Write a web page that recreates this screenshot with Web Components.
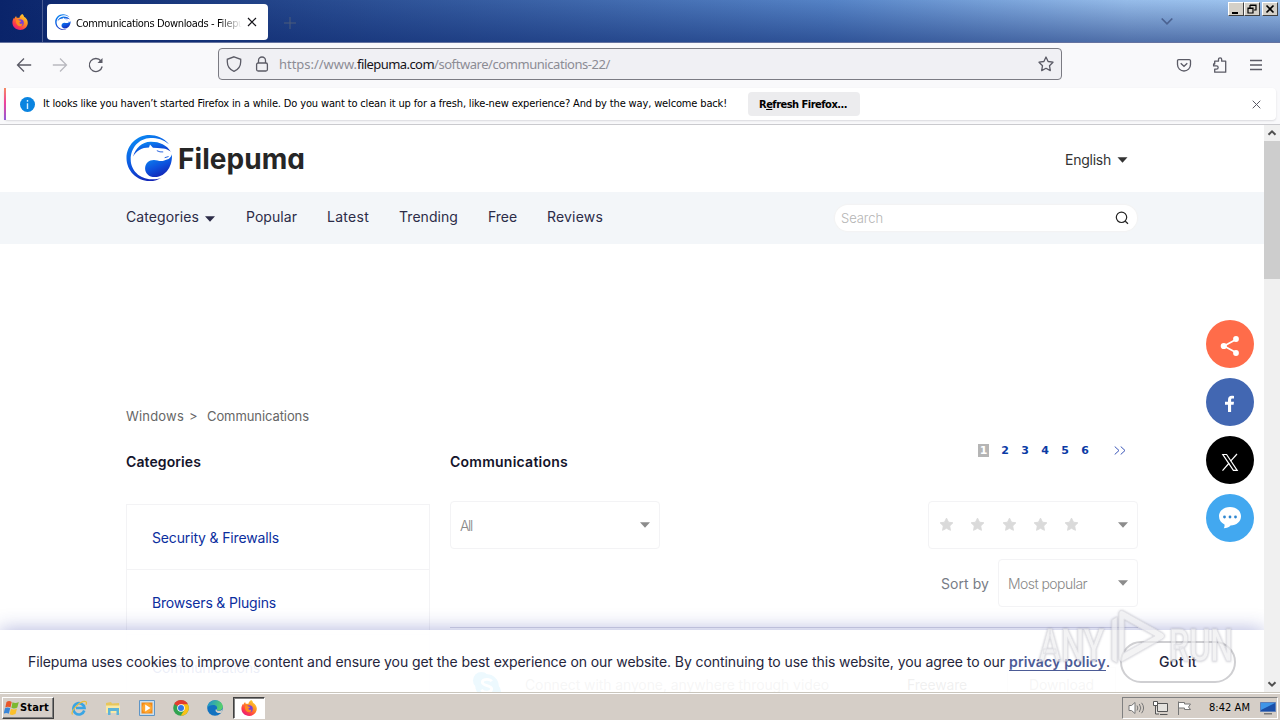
<!DOCTYPE html>
<html lang="en">
<head>
<meta charset="utf-8">
<title>Communications Downloads - Filepuma</title>
<style>
html, body { margin: 0; height: 100%; }
body {
    display: flex;
    flex-direction: column;
    width: 1280px;
    height: 720px;
    overflow: hidden;
    background: #fff;
    font-family: Inter, "Liberation Sans", sans-serif;
}
.view { display: flex; height: 567px; }
</style>
</head>
<body>
<tab-strip></tab-strip>
<nav-toolbar></nav-toolbar>
<notice-bar></notice-bar>
<div class="view">
    <site-page></site-page>
    <scroll-bar></scroll-bar>
</div>
<task-bar></task-bar>

<script>
// Shared base: every element renders its html() into an open shadow root
class BaseElement extends HTMLElement {
    constructor() {
        super();
        this.attachShadow({ mode: 'open' }).innerHTML = this.html();
    }
}

const CHROME_FONT = '"DejaVu Sans Condensed", "DejaVu Sans", sans-serif';

const FIREFOX = `
<defs>
  <linearGradient id="fx" x1=".9" y1="0" x2=".2" y2="1"><stop offset="0" stop-color="#ffe03a"/><stop offset=".4" stop-color="#ff9420"/><stop offset=".75" stop-color="#ff3b4a"/><stop offset="1" stop-color="#e21586"/></linearGradient>
</defs>
<path fill="url(#fx)" d="M10.3 0c1 .9 1.6 1.8 1.8 2.8 2 1.2 3.9 3.6 3.7 6.3-.2 4-3.5 6.9-7.6 6.9C3.800 16 .4 12.700.4 8.600c0-2.300.9-3.900 1.700-4.900l.3 1.200C2.700 3.500 3.400 2.600 4.200 2c0 .6.2 1.300.6 1.800 1-.2 1.700 0 2.500.3C7.600 2.300 8.700.7 10.300 0z"/>
<circle cx="8.300" cy="8.700" r="3.500" fill="#7a3fd6"/>
<path fill="#ff8a1e" d="M4 6.200c1.200-.7 2.600-.4 3.500.3l1.700.5c-.3.900-1.400 1.100-1.900 1.600.2 1.300 1.800 1.700 3 .8.3 2-1.100 3-2.700 2.800C5.300 12 3.600 9.200 4 6.200z"/>`;

// Round puma mark, drawn on a 48x48 grid
const PUMA = `
<defs><linearGradient id="pu" x1=".2" y1="0" x2=".7" y2="1"><stop offset="0" stop-color="#0a8cf5"/><stop offset=".55" stop-color="#0d50dc"/><stop offset="1" stop-color="#141fb0"/></linearGradient></defs>
<path fill="url(#pu)" d="M44 10C38.500 3.200 31 .5 24 .5 11 .5.5 11 .5 24S11 47.500 24 47.500c5 0 9-1.300 12.500-3.700C32.500 45.500 29 46 26 45.700 14 45.500 4.800 36.500 4.800 25.500 4.800 13.500 13 4 25 3.500c7.500 0 13 1.500 19 6.500z"/>
<path fill="url(#pu)" d="M7.300 22.500C9.500 13.500 16.500 7.600 25 7.300c9-.2 16.500 3.200 20.800 10.200-2.600-1.600-5-3-8-3.100l-5.500-.6-4.800-.2-3-3.400-1 3.200C16.500 13.300 11 16.500 7.300 22.500z"/>
<path fill="url(#pu)" d="M46.800 20.200c1.200 11-5.500 23-17.300 23.300-6.200 0-10-3.900-10-8.800 0-5.300 4-8.700 9-8.700 3.500 0 5.500 1.700 9 1 2.300-.5 3.600-1.600 6-2.100 1.600-1 2.800-2.600 3.300-4.700z"/>
<path fill="none" stroke="#0d50dc" stroke-width=".9" d="M31.500 16.500l3.200 1.200 3.300.1M43.500 22.500l-4 1.200"/>`;

const caret = (color, w = 10) => `<svg width="${w}" height="6" viewBox="0 0 10 6"><path fill="${color}" d="M0 .3h10L5 5.700z"/></svg>`;

class TabStrip extends BaseElement {
    html() {
        return `<style>
        :host {
            display: flex;
            height: 43px;
            box-sizing: border-box;
            background: linear-gradient(180deg, transparent, rgba(10,36,106,.5)), linear-gradient(90deg, #0a246a 0%, #2b4f94 28%, #5583c6 65%, #96bce9 88%, #a0c6f0);
            border-bottom: 1px solid #6573a0;
            font: 11px ${CHROME_FONT};
        }
        svg { display: block; }
        .home { width: 43px; border-right: 1px solid #4a5d93; padding: 14px 0 0 12px; box-sizing: border-box; }
        .tab {
            display: flex;
            align-items: center;
            width: 221px;
            height: 36px;
            margin: 4px 0 0 4px;
            padding: 0 11px 0 8px;
            box-sizing: border-box;
            background: #fff;
            border-radius: 4px;
        }
        .title { width: 166px; margin: 2px 5px 0 5px; overflow: hidden; white-space: nowrap; color: #000; -webkit-mask: linear-gradient(90deg, #000 86%, transparent); mask: linear-gradient(90deg, #000 86%, transparent); }
        .plus { margin: 17px 0 0 16px; }
        .list { margin: 17px 0 0 auto; }
        .buttons { display: flex; margin: 2px 2px 0 55px; }
        .buttons svg { width: 16px; height: 14px; background: #d4d0c8; box-sizing: border-box; border: 1px solid; border-color: #fff #404040 #404040 #fff; }
        .buttons svg:last-child { margin-left: 2px; }
        </style>
        <div class="home"><svg width="16" height="16" viewBox="0 0 16 16">${FIREFOX}</svg></div>
        <div class="tab">
            <svg width="16" height="16" viewBox="0 0 48 48">${PUMA}</svg>
            <div class="title"><fit-text w="183">Communications Downloads - Filepuma</fit-text></div>
            <svg width="10" height="10" viewBox="0 0 10 10"><path d="M1 1l8 8M9 1L1 9" stroke="#15141a" stroke-width="1.2"/></svg>
        </div>
        <svg class="plus" width="12" height="12"><path d="M0 6h12M6 0v12" stroke="#4c5d7b"/></svg>
        <svg class="list" width="12" height="9"><path d="M.7 1.500L6 6.800l5.300-5.300" fill="none" stroke="#4b6290" stroke-width="1.700"/></svg>
        <div class="buttons">
            <svg viewBox="0 0 14 12"><path d="M3 9h6v2H3z"/></svg>
            <svg viewBox="0 0 14 12"><path d="M5 2h6v5H9M5 2v3M5 2.500h6M3 5h5v5H3zM3 5.500h5" fill="none" stroke="#000" stroke-width="1.200"/></svg>
            <svg viewBox="0 0 14 12"><path d="M3.500 2.500l7 7M10.500 2.500l-7 7" stroke="#000" stroke-width="1.700"/></svg>
        </div>`;
    }
}

class NavToolbar extends BaseElement {
    html() {
        return `<style>
        :host { display: flex; align-items: center; height: 45px; padding: 0 16px; box-sizing: border-box; background: #f9f9fb; font: 13px "Noto Sans", sans-serif; }
        svg { display: block; fill: none; stroke: #5b5b66; stroke-width: 1.300; margin-top: -2px; }
        .back { margin-right: 20px; }
        .next { margin-right: 20px; opacity: .4; }
        .url {
            display: flex;
            align-items: center;
            width: 844px;
            height: 32px;
            margin: -3px 0 0 114px;
            padding: 0 7px;
            box-sizing: border-box;
            background: #f0f0f4;
            border: 1px solid #7b7b83;
            border-radius: 4px;
            color: #8c8c94;
            white-space: nowrap;
        }
        .url svg { margin: 0; }
        .lock { margin: 0 9px 0 12px !important; }
        .url b { font-weight: 400; color: #15141a; letter-spacing: .35px; }
        .star { margin-left: auto !important; }
        .pocket { margin-left: 114px; }
        .ext { margin-left: 20px; }
        .menu { margin-left: 20px; }
        </style>
        <svg class="back" width="16" height="16"><path d="M15.200 8H1.500M8 1.500L1.500 8 8 14.500"/></svg>
        <svg class="next" width="16" height="16"><path d="M.8 8h13.700M8 1.500L14.500 8 8 14.500"/></svg>
        <svg width="16" height="16"><path d="M14.200 9.500A6.500 6.500 0 1 1 13 4"/><path d="M14.500 1v5h-5z" fill="#5b5b66" stroke="none"/></svg>
        <div class="url">
            <svg width="16" height="16"><path d="M8 .8l6.700 2.500v2.400C14.700 10 12 13.600 8 15.400 4 13.600 1.300 10 1.300 5.700V3.300z"/></svg>
            <svg class="lock" width="16" height="16"><rect x="2.600" y="7" width="10.800" height="8" rx="1.500"/><path d="M4.500 7V4.500a3.500 3.500 0 0 1 7 0V7"/></svg>
            <fit-text w="78">https://www.</fit-text><b><fit-text w="77">filepuma.com</fit-text></b><fit-text w="176">/software/communications-22/</fit-text>
            <svg class="star" width="16" height="16"><path stroke-linejoin="round" d="M8 1l2.100 4.500 4.900.7-3.500 3.500.8 4.900L8 12.300l-4.300 2.300.8-4.900L1 6.200l4.900-.7z"/></svg>
        </div>
        <svg class="pocket" width="16" height="16"><path d="M2.700 2.600h10.600a1.200 1.200 0 0 1 1.200 1.200v3.700a6.500 6.500 0 0 1-13 0V3.800a1.200 1.200 0 0 1 1.200-1.200z"/><path d="M4.700 6.200L8 9.300l3.300-3.100"/></svg>
        <svg class="ext" width="16" height="16"><path stroke-linejoin="round" d="M2.700 7V4.200h3.800V2.400a1.600 1.600 0 0 1 3.200 0v1.800h4v11h-11v-3h1.800a1.600 1.600 0 0 0 0-3.300H1.600V7z"/></svg>
        <svg class="menu" width="16" height="16"><path d="M2 3.500h12M2 8h12M2 12.500h12"/></svg>`;
    }
}

class NoticeBar extends BaseElement {
    html() {
        return `<style>
        :host { display: block; height: 37px; padding: 0 4px; box-sizing: border-box; background: #f9f9fb; border-bottom: 1px solid #cacace; font: 11px ${CHROME_FONT}; color: #000; }
        .bar { display: flex; align-items: center; height: 32px; background: #fff; border-radius: 4px; padding-right: 15px; box-shadow: 0 1px 2px rgba(58,57,68,.16); white-space: nowrap; }
        .accent { width: 2px; height: 32px; background: linear-gradient(#f58b62, #f0429a 45%, #9059d8); }
        .info { margin: 0 8px 0 14px; }
        .msg { margin-top: -2px; }
        .btn { display: flex; align-items: center; width: 112px; height: 24px; margin-left: 21px; padding-left: 11px; box-sizing: border-box; background: #ececee; border-radius: 4px; font-weight: 700; }
        .close { margin-left: auto; }
        </style>
        <div class="bar">
            <div class="accent"></div>
            <svg class="info" width="15" height="15"><circle cx="7.500" cy="7.500" r="7.500" fill="#0a84e0"/><path d="M7.500 3v1.800M7.500 6.200v5.800" stroke="#d8efff" stroke-width="1.400"/></svg>
            <fit-text class="msg" w="684">It looks like you haven’t started Firefox in a while. Do you want to clean it up for a fresh, like-new experience? And by the way, welcome back!</fit-text>
            <div class="btn"><fit-text w="88">R<u>e</u>fresh Firefox...</fit-text></div>
            <svg class="close" width="9" height="9"><path d="M.7.7l7.600 7.600M8.300.7L.7 8.300" stroke="#5b5b66"/></svg>
        </div>`;
    }
}

class ScrollBar extends BaseElement {
    html() {
        return `<style>
        :host { display: flex; flex-direction: column; width: 16px; height: 567px; background: #f0f0f0; }
        svg { display: block; flex: none; }
        .thumb { height: 138px; background: #cdcdcd; }
        .down { margin-top: auto; }
        </style>
        <svg width="16" height="16"><path d="M4.500 9.800L8 6.300l3.500 3.500" fill="none" stroke="#505050" stroke-width="2"/></svg>
        <div class="thumb"></div>
        <svg class="down" width="16" height="16"><path d="M4.500 6.200L8 9.700l3.500-3.500" fill="none" stroke="#505050" stroke-width="2"/></svg>`;
    }
}

class SiteHeader extends BaseElement {
    html() {
        return `<style>
        :host { display: block; }
        .top, nav { display: flex; align-items: center; padding: 0 126px; }
        .top { height: 67px; }
        .logo { margin-top: -1px; }
        .name { margin: 0 0 0 5px; font-size: 28px; font-weight: 700; color: #262626; font-feature-settings: "cv11", "ss03"; }
        .lang { display: flex; align-items: center; gap: 6px; margin: 3px 10px 0 auto; font-size: 14px; color: #333; }
        .lang fit-text { margin-top: -1px; }
        nav { height: 52px; background: #f3f6f9; font-size: 14px; color: #2c2c48; }
        nav fit-text { margin: -3px 30px 0 0; }
        nav .first { margin-right: 6px; }
        nav > svg { margin: 1px 31px 0 0; }
        .search { display: flex; align-items: center; justify-content: space-between; width: 302px; height: 26px; margin: 0 1px 0 auto; padding: 0 8px 0 6px; box-sizing: border-box; background: #fff; border-radius: 13px; box-shadow: 0 0 1px 1px #f3f3f3; font-size: 13px; font-weight: 300; color: #b4b4b4; }
        .search fit-text { margin: 0; }
        .search svg { margin-top: -1px; }
        </style>
        <div class="top">
            <svg class="logo" width="47" height="48" viewBox="0 0 48 48">${PUMA}</svg>
            <fit-text class="name" w="127">Filepuma</fit-text>
            <div class="lang"><fit-text w="46">English</fit-text>${caret('#333', 11)}</div>
        </div>
        <nav>
            <fit-text class="first" w="73">Categories</fit-text>${caret('#2c2c48')}
            <fit-text w="51">Popular</fit-text>
            <fit-text w="42">Latest</fit-text>
            <fit-text w="59">Trending</fit-text>
            <fit-text w="29">Free</fit-text>
            <fit-text w="56">Reviews</fit-text>
            <div class="search"><fit-text w="42">Search</fit-text><svg width="14" height="14"><g fill="none" stroke="#222" stroke-width="1.200"><circle cx="6.500" cy="6.300" r="5.200"/><path d="M10.300 10.200l2.700 2.600"/></g></svg></div>
        </nav>`;
    }
}

class SelectBox extends BaseElement {
    html() {
        return `<style>
        :host { display: flex; align-items: center; justify-content: space-between; width: 210px; height: 48px; padding: 0 9px; box-sizing: border-box; border: 1px solid #f3f3f5; border-radius: 4px; font-size: 14px; font-weight: 300; color: #888; }
        svg { margin-top: -1px; }
        </style>
        <slot></slot>${caret('#8c8c8c')}`;
    }
}

class StarRow extends BaseElement {
    html() {
        const star = '<svg width="15" height="15" viewBox="0 0 16 16"><path fill="#dadada" stroke="#dadada" stroke-linejoin="round" d="M8 1.200l2.100 4.300 4.700.7-3.400 3.300.8 4.700L8 12l-4.200 2.200.8-4.700L1.200 6.200l4.700-.7z"/></svg>';
        return `<style>
        :host { display: flex; gap: 16.300px; margin: -2px 0 0 1px; }
        svg { display: block; }
        </style>${star.repeat(5)}`;
    }
}

class ShareRail extends BaseElement {
    html() {
        return `<style>
        :host { display: flex; flex-direction: column; gap: 10px; }
        svg { display: block; }
        </style>
        <svg width="48" height="48"><circle cx="24" cy="24" r="24" fill="#ff6c4a"/><path d="M30 19.500L18 26l12 6.500" fill="none" stroke="#fff" stroke-width="1.700"/><g fill="#fff"><circle cx="30" cy="19" r="2.900"/><circle cx="17.800" cy="26" r="3.100"/><circle cx="30" cy="33" r="2.900"/></g></svg>
        <svg width="48" height="48"><circle cx="24" cy="24" r="24" fill="#4267b2"/><path fill="#fff" d="M22 34v-7.300h-3v-2.900h3V22c0-3 1.500-4.300 3.800-4.300.9 0 1.700.1 2.200.2v2.500h-1.500c-1.200 0-1.400.6-1.400 1.500v1.900H28l-.4 2.900h-2.500V34z"/></svg>
        <svg width="48" height="48"><circle cx="24" cy="24" r="24"/><path d="M16.800 18.500h3.800l10.600 15.800h-3.800z" fill="none" stroke="#fff" stroke-width="1.200"/><path d="M31 18l-6.400 7.200M23.200 27L16.500 34.700" stroke="#fff" stroke-width="1.200"/></svg>
        <svg width="48" height="48"><circle cx="24" cy="24" r="24" fill="#42a8f0"/><path fill="#fff" d="M24 13c6.300 0 11 4 11 9.300S30.500 31.500 24.500 31.500c-1.500 1.700-3.800 2.700-6.700 2.700.6-1 .9-2.200.7-3.600-3.300-1.600-5.500-4.600-5.500-8.300C13 17 17.700 13 24 13z"/><g fill="#2e86d0"><circle cx="18.500" cy="23" r="1.400"/><circle cx="24" cy="23" r="1.400"/><circle cx="29.500" cy="23" r="1.400"/></g></svg>`;
    }
}

class CookieBar extends BaseElement {
    html() {
        return `<style>
        :host { display: flex; align-items: center; height: 62px; padding: 0 28px; box-sizing: border-box; background: rgba(255,255,255,.92); box-shadow: 0 0 20px rgba(40,50,160,.38); font-size: 14px; color: #25253c; white-space: nowrap; }
        .text { display: flex; }
        .text > fit-text:first-child { margin-right: 4px; }
        a { font-weight: 600; color: #4c5b96; text-decoration: underline; text-underline-offset: 3px; }
        .ok { display: flex; align-items: center; justify-content: center; width: 116px; height: 42px; margin: 1px 0 0 9px; box-sizing: border-box; border: 2px solid #cfcfd2; border-radius: 21px; font-weight: 500; }
        </style>
        <div class="text"><fit-text w="977">Filepuma uses cookies to improve content and ensure you get the best experience on our website. By continuing to use this website, you agree to our</fit-text><a><fit-text w="97">privacy policy</fit-text></a><fit-text w="5">.</fit-text></div>
        <div class="ok"><fit-text w="38">Got it</fit-text></div>`;
    }
}

class RunMark extends BaseElement {
    html() {
        return `<style>
        :host { display: block; pointer-events: none; }
        svg { display: block; filter: drop-shadow(0 0 1px rgba(90,90,110,.5)); opacity: .8; }
        text { font: 500 44px Roboto, "Liberation Sans", sans-serif; }
        </style>
        <svg width="204" height="70" fill="rgba(255,255,255,.75)" stroke="#dcdce1" stroke-width="1">
            <text x="3" y="55" textLength="65" lengthAdjust="spacingAndGlyphs">ANY</text>
            <text x="133" y="55" textLength="64" lengthAdjust="spacingAndGlyphs">RUN</text>
            <path d="M76 14l5-3v46l-5-3z"/>
            <path fill-rule="evenodd" d="M87 5l39 22c3 2 3 4 0 6L87 55c-2 1-4-1-4-3V8c0-3 2-4 4-3zm1 8v34l31-17z"/>
        </svg>`;
    }
}

class SitePage extends BaseElement {
    html() {
        return `<style>
        :host { display: block; position: relative; width: 1264px; height: 567px; overflow: hidden; background: #fff; font-size: 14px; white-space: nowrap; }
        .crumbs { display: flex; margin: 163px 0 0 126px; height: 18px; align-items: center; font-size: 13px; color: #666; }
        .cols { display: grid; grid-template-columns: 304px 688px; gap: 20px; margin: 20px 0 0 126px; }
        h2 { margin: 8px 0 0; height: 18px; line-height: 18px; font-size: 14px; font-weight: 600; color: #14142b; }
        .list { margin-top: 33px; border: 1px solid #f3f3f5; border-bottom: 0; }
        .list a { display: flex; align-items: center; height: 65px; padding: 0 25px; box-sizing: border-box; border-bottom: 1px solid #f3f3f5; color: #0b2e9e; }
        .head { display: flex; justify-content: space-between; }
        .pages { display: flex; align-items: center; height: 14px; margin: -2px 12px 0 0; font: 700 11px "DejaVu Sans", sans-serif; color: #0b3aa5; }
        .pages span { width: 20px; text-align: center; }
        .pages .on { width: 11px; margin-right: 6px; background: #b5b5b5; color: #fff; }
        .pages svg { margin-left: 19px; }
        .filters { display: flex; justify-content: space-between; margin-top: 30px; }
        .sort { display: flex; align-items: center; justify-content: flex-end; gap: 9px; margin-top: 10px; color: #777c86; }
        .sort select-box { width: 140px; }
        .sort select-box fit-text, .filters fit-text { margin-top: 1px; }
        .item { display: flex; align-items: flex-start; margin-top: 20px; border-top: 1px solid #d8dae6; padding: 39px 22px 0 22px; height: 80px; color: #888; }
        .item svg { margin: 3px 23px 0 0; }
        .item fit-text { margin-top: 9px; }
        .free { margin-left: 78px; color: #444; }
        .item .dl { margin: 0 0 0 40px; padding: 8px 21px 10px; border: 1px solid #e6e6e6; }
        .item .dl fit-text { margin: 0; }
        share-rail { position: absolute; left: 1206px; top: 195px; }
        cookie-bar { position: absolute; left: 0; right: 0; bottom: 0; }
        run-mark { position: absolute; left: 1036px; top: 481px; }
        </style>
        <site-header></site-header>
        <div class="crumbs"><fit-text w="58">Windows</fit-text><fit-text w="8" style="margin:0 10px 0 5px">&gt;</fit-text><fit-text w="102">Communications</fit-text></div>
        <div class="cols">
            <section>
                <h2><fit-text w="75">Categories</fit-text></h2>
                <div class="list">
                    <a><fit-text w="127">Security &amp; Firewalls</fit-text></a>
                    <a><fit-text w="124">Browsers &amp; Plugins</fit-text></a>
                    <a><fit-text w="108">Communications</fit-text></a>
                </div>
            </section>
            <section>
                <div class="head">
                    <h2><fit-text w="118">Communications</fit-text></h2>
                    <div class="pages"><span class="on">1</span><span>2</span><span>3</span><span>4</span><span>5</span><span>6</span><svg width="12" height="9"><path d="M.7.500L5 4.500.7 8.500M6.700.500L11 4.500 6.700 8.500" fill="none" stroke="#3a55b8"/></svg></div>
                </div>
                <div class="filters">
                    <select-box><fit-text w="12">All</fit-text></select-box>
                    <select-box><star-row></star-row></select-box>
                </div>
                <div class="sort"><fit-text w="48">Sort by</fit-text><select-box><fit-text w="79">Most popular</fit-text></select-box></div>
                <div class="item">
                    <svg width="32" height="32" viewBox="0 0 32 32"><circle cx="10" cy="10" r="9" fill="#1eaeee"/><circle cx="22" cy="22" r="9" fill="#1eaeee"/><circle cx="16" cy="16" r="12.500" fill="#1eaeee"/><path d="M21 11c-2-3-10-3-10 1s10 3 10 7-8 5-11 1" fill="none" stroke="#fff" stroke-width="3"/></svg>
                    <fit-text w="304">Connect with anyone, anywhere through video</fit-text>
                    <fit-text class="free" w="60">Freeware</fit-text>
                    <div class="dl"><fit-text w="65">Download</fit-text></div>
                </div>
            </section>
        </div>
        <share-rail></share-rail>
        <cookie-bar></cookie-bar>
        <run-mark></run-mark>`;
    }
}

class TaskBar extends BaseElement {
    html() {
        return `<style>
        :host { display: flex; align-items: center; height: 28px; padding: 2px 2px 0; box-sizing: border-box; background: #d5cec7; border-top: 1px solid #c9c5bc; box-shadow: inset 0 1px #fff; font: 11px ${CHROME_FONT}; color: #000; }
        svg { display: block; flex: none; }
        .start { display: flex; align-items: center; width: 52px; height: 22px; padding: 0 1px; box-sizing: border-box; border: 1px solid; border-color: #fff #404040 #404040 #fff; box-shadow: inset -1px -1px #808080; font-weight: 700; }
        .start fit-text { margin-top: -1px; }
        .apps { display: flex; gap: 18px; margin-left: 17px; }
        .active { display: flex; align-items: center; justify-content: center; width: 32px; height: 22px; margin-left: 10px; box-sizing: border-box; background: #fff; border: 1px solid; border-color: #404040 #fff #fff #404040; box-shadow: inset 1px 1px #808080; }
        .tray { display: flex; align-items: center; width: 156px; height: 22px; margin-left: auto; padding: 0 3px 0 5px; box-sizing: border-box; border: 1px solid; border-color: #808080 #fff #fff #808080; }
        </style>
        <div class="start">
            <svg width="16" height="16" viewBox="0 0 16 16"><path fill="#e8562a" d="M2.500 2C4 .8 6 .8 7.700 1.900L6.500 7.400C4.900 6.400 3 6.400 1.300 7.400z"/><path fill="#7cb82f" d="M8.500 2.300c1.800 1 4 1 6.300-.2l-1.500 5.500c-1.900 1-4.200 1.200-5.900.2z"/><path fill="#3a86d8" d="M1 8.300c1.700-1 3.600-1 5.200 0l-1.400 5.500c-1.600-1-3.500-1-5.200 0z"/><path fill="#fbc02a" d="M7 8.700c1.700 1 4 1 6-.1l-1.500 5.500c-1.800 1-4.200 1.100-5.900.1z"/></svg>
            <fit-text w="29">Start</fit-text>
        </div>
        <div class="apps">
            <svg width="16" height="16" viewBox="0 0 16 16"><path d="M13.300 10.500A5.600 5.600 0 1 1 13.500 8H5" fill="none" stroke="#3aa5e4" stroke-width="2.600"/><path d="M1.500 14.500C-1 11.500 10-.5 15 1.800c.7.500.5 1.700 0 3" fill="none" stroke="#e8bd3c" stroke-width="1.200"/></svg>
            <svg width="16" height="16" viewBox="0 0 16 16"><path fill="#e7c65c" d="M1 3l5-1 1 1.500 7-.5v10H1z"/><path fill="#f8e9a6" d="M1 5.500h14V13H1z"/><path fill="#5db4d8" d="M3 8h11v7h-2.500v-4h-6v4H3z"/></svg>
            <svg width="16" height="16" viewBox="0 0 16 16"><path fill="#c9dff0" stroke="#5e95c6" d="M.5.500h15v15H.5z"/><path fill="#f28a18" d="M2.500 2.500h11v11h-11z"/><circle cx="8" cy="8" r="5" fill="#ffa62f"/><path fill="#fff" d="M6.200 4.500L11.500 8l-5.300 3.500z"/></svg>
            <svg width="16" height="16" viewBox="0 0 16 16"><circle cx="8" cy="8" r="7.800" fill="#31a350"/><path fill="#e33b2e" d="M8 8L1.200 4.100a7.800 7.800 0 0 1 13.600 0z"/><path fill="#fbc116" d="M8 4.200h6.800A7.800 7.800 0 0 1 7.700 15.800L11.400 9.900z"/><circle cx="8" cy="8" r="3.800" fill="#fff"/><circle cx="8" cy="8" r="3" fill="#3277e6"/></svg>
            <svg width="16" height="16" viewBox="0 0 16 16"><defs><linearGradient id="ed" x1="0" y1="0" x2="1" y2=".3"><stop offset="0" stop-color="#1a8ed8"/><stop offset="1" stop-color="#56cf6c"/></linearGradient></defs><circle cx="8" cy="8" r="7.800" fill="#1272c0"/><path fill="url(#ed)" d="M.2 8C.5 3.500 4 .2 8.200.2c4.500 0 7.600 3 7.600 6.500 0 2.400-1.800 3.800-4 3.800-1.700 0-2.600-.5-2-1.400 1-1.500-.2-4-3.500-4C3.300 5.100 1 6.200.2 8z"/><path fill="#d4d0c8" d="M9.600 9.200c-.5.800.5 1.600 2.400 1.600 1.400 0 2.500-.4 3.500-1.300l-1 3.200c-3 1.200-6-.4-6-2.500 0-.7.400-1.200 1.100-1z"/></svg>
        </div>
        <div class="active"><svg width="16" height="16" viewBox="0 0 16 16">${FIREFOX}</svg></div>
        <div class="tray">
            <svg width="17" height="16" viewBox="0 0 17 16"><g fill="none" stroke="#777"><path fill="#fff" d="M1 5.500h2.500L7 2.500v11l-3.500-3H1z"/><path d="M9 5.500q1.700 2.500 0 5M11.300 4q3 4 0 8M13.600 2.800q4 5.200 0 10.400"/></g></svg>
            <svg width="17" height="16" viewBox="0 0 17 16" style="margin-left:7px"><g fill="#e4e2de" stroke="#555"><path d="M5.500 3.500h10v8h-10zM8 14.500h7.500M3.500 5.500v8.500H7"/><path fill="#fff" d="M1.500 1.500h4v4h-4z"/></g></svg>
            <svg width="16" height="16" viewBox="0 0 16 16" style="margin-left:7px"><path fill="#fff" stroke="#777" d="M2.500 15V1.500M2.500 2.500h6v1.500h6l-2 3 2 2.500H8.500V8h-6"/></svg>
            <fit-text w="41" style="margin-left:17px">8:42 AM</fit-text>
            <svg width="16" height="14" viewBox="0 0 16 14" style="margin-left:10px"><path fill="#1b4fa8" stroke="#5d7fb8" d="M.5 1.500h15v9H.5z"/><path fill="#3f95e8" d="M1 2h14L1 9z"/><path fill="#777" d="M4 12h8v1.500H4z"/></svg>
        </div>`;
    }
}

// Spreads its text to the width in `w` by letter spacing
class FitText extends BaseElement {
    html() {
        return `<style>
        :host { display: inline-block; flex: none; white-space: nowrap; letter-spacing: 0; text-decoration: inherit; }
        </style><slot></slot>`;
    }

    connectedCallback() {
        const target = Number(this.getAttribute('w'));
        const width = this.getBoundingClientRect().width;
        const space = (target - width) / this.textContent.length;
        this.style.letterSpacing = space.toFixed(4) + 'px';
    }
}

customElements.define('tab-strip', TabStrip);
customElements.define('nav-toolbar', NavToolbar);
customElements.define('notice-bar', NoticeBar);
customElements.define('scroll-bar', ScrollBar);
customElements.define('site-page', SitePage);
customElements.define('site-header', SiteHeader);
customElements.define('select-box', SelectBox);
customElements.define('star-row', StarRow);
customElements.define('share-rail', ShareRail);
customElements.define('cookie-bar', CookieBar);
customElements.define('run-mark', RunMark);
customElements.define('task-bar', TaskBar);
// last, so that the text is already laid out when it is measured
customElements.define('fit-text', FitText);
</script>
</body>
</html>
